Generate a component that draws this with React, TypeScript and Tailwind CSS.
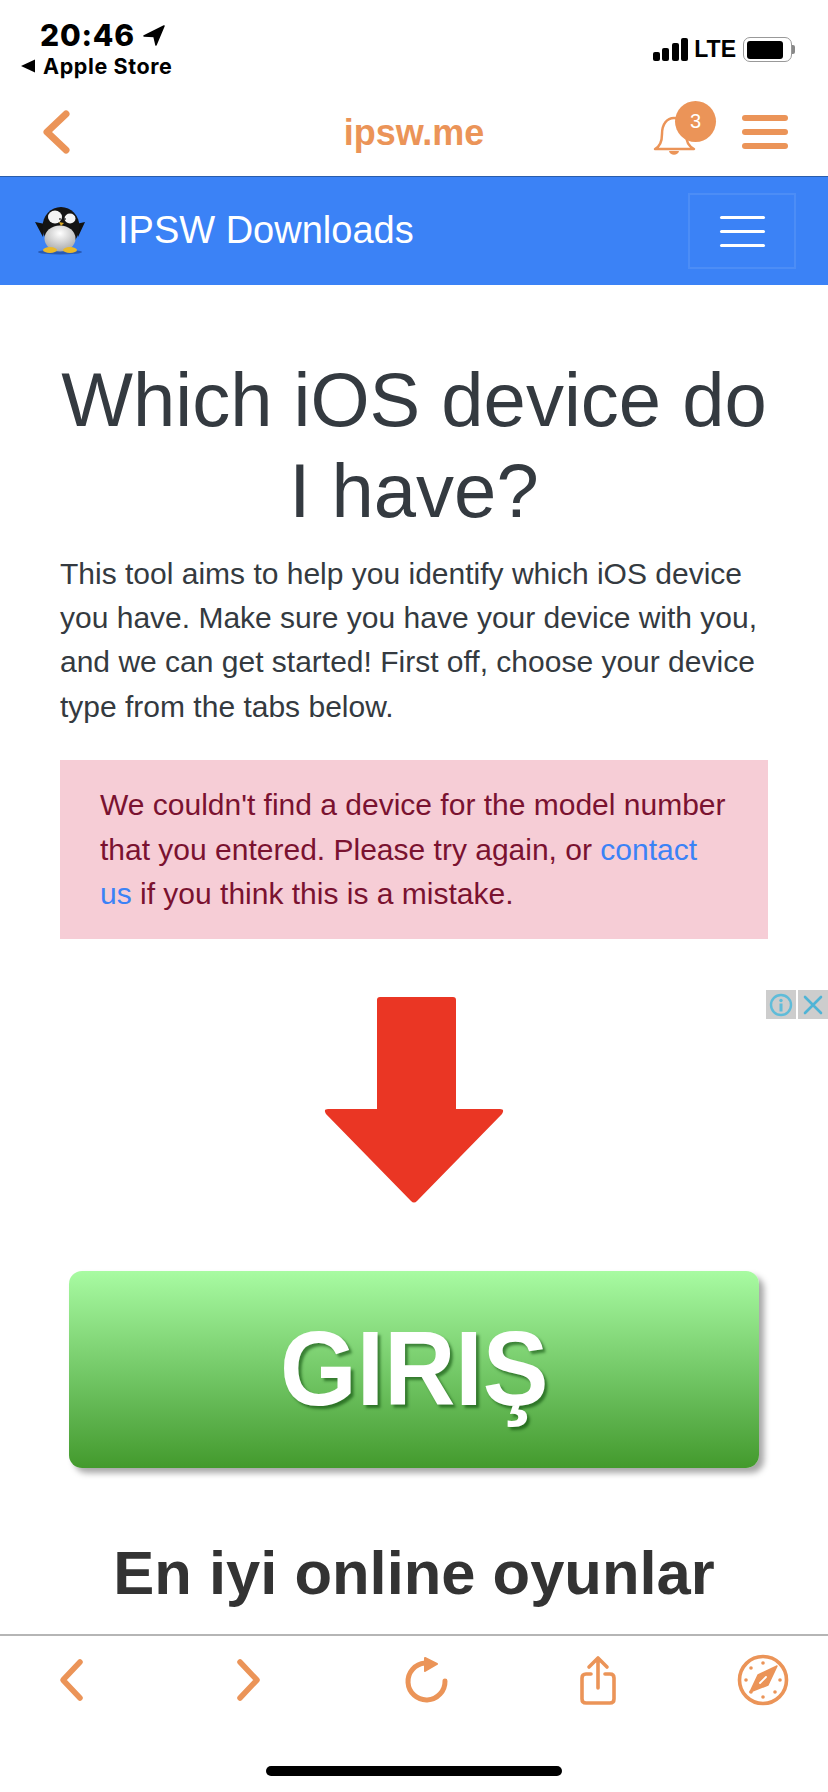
const orange = "#eb9458";

function Penguin() {
  return (
    <svg width="56" height="50" viewBox="0 0 56 50">
      <defs>
        <radialGradient id="belly" cx="50%" cy="30%" r="70%">
          <stop offset="0%" stopColor="#ffffff" />
          <stop offset="100%" stopColor="#a9a9a9" />
        </radialGradient>
      </defs>
      <ellipse cx="28" cy="46" rx="22" ry="2.5" fill="#1d3f8a" opacity="0.6" />
      <path d="M13 18 L3 16 L11 31 Z" fill="#111" />
      <path d="M44 18 L53 16 L46 31 Z" fill="#111" />
      <ellipse cx="29" cy="21" rx="18.5" ry="20" fill="#141414" />
      <ellipse cx="28" cy="32.5" rx="15.5" ry="13" fill="url(#belly)" />
      <ellipse cx="23" cy="11" rx="7" ry="6.5" fill="#f4f4f4" />
      <ellipse cx="38" cy="12.5" rx="5.5" ry="5" fill="#f4f4f4" />
      <circle cx="28" cy="13" r="0.9" fill="#333" />
      <circle cx="33" cy="13" r="0.9" fill="#333" />
      <path d="M27 16 L32 17 L29 20 Z" fill="#d8a726" />
      <ellipse cx="18" cy="44" rx="7" ry="3" fill="#eab92a" />
      <ellipse cx="38" cy="44" rx="7" ry="3" fill="#eab92a" />
    </svg>
  );
}

function StatusBar() {
  return (
    <div className="flex h-[92px] justify-between text-black">
      <div className="pl-[21px] pt-[17px]">
        <div className="flex items-center pl-[19px]">
          <span className="font-['Inter'] text-[30px] leading-[36px] font-extrabold tracking-[0.8px]">20:46</span>
          <svg width="22" height="22" viewBox="0 0 22 22" className="ml-[8px]">
            <path d="M21 2 L1 12 L11 12.5 L13 21 Z" fill="#000" stroke="#000" strokeLinejoin="round" strokeWidth="1.5" />
          </svg>
        </div>
        <div className="flex items-center">
          <svg width="15" height="14" viewBox="0 0 15 14">
            <path d="M14 0.5 V13.5 L0 7 Z" fill="#000" />
          </svg>
          <span className="ml-[7px] font-['Inter'] text-[21.5px] leading-[26px] font-bold tracking-[0.6px]">Apple Store</span>
        </div>
      </div>
      <div className="flex items-start pt-[37px] pr-[33px]">
        <div className="flex h-[24px] items-end gap-[2.5px]">
          <div className="h-[9px] w-[7px] rounded-[2px] bg-black" />
          <div className="h-[13px] w-[7px] rounded-[2px] bg-black" />
          <div className="h-[18px] w-[7px] rounded-[2px] bg-black" />
          <div className="h-[23px] w-[7px] rounded-[2px] bg-black" />
        </div>
        <span className="ml-[6px] text-[23px] leading-[24px] font-bold">LTE</span>
        <div className="ml-[7px] flex items-center">
          <div className="h-[25px] w-[49px] rounded-[7px] border-[1.5px] border-[#999] p-[2.5px]">
            <div className="h-full w-[36px] rounded-[3px] bg-black" />
          </div>
          <div className="h-[9px] w-[3px] rounded-r-[2px] bg-[#888]" />
        </div>
      </div>
    </div>
  );
}

function TopNav() {
  return (
    <div className="flex h-[85px] items-center border-b border-[#2a5dab] pb-[5px]" style={{ color: orange }}>
      <div className="w-[287px] pl-[42px]">
        <svg width="28" height="44" viewBox="0 0 28 44" className="block">
          <path d="M24 4 L5 22 L24 40" fill="none" stroke={orange} strokeWidth="7" strokeLinecap="round" strokeLinejoin="round" />
        </svg>
      </div>
      <div className="w-[254px] pt-[3px] text-center text-[36px] leading-[40px] font-bold">ipsw.me</div>
      <div className="flex flex-1 items-center pl-[112px]">
        <div className="relative h-[44px] w-[44px]">
          <svg width="44" height="44" viewBox="0 0 44 44" className="mt-[3px]">
            <path d="M2 36 C8 33 9 27 9 21 C9 11 14 5 21 5 C28 5 33 11 33 21 C33 27 35 33 41 36 Z" fill="none" stroke={orange} strokeWidth="2.5" strokeLinejoin="round" />
            <path d="M16 38 C17 43 25 43 26 38 Z" fill={orange} />
          </svg>
          <div className="absolute left-[22px] top-[-9px] h-[41px] w-[41px] rounded-full bg-[#eb9458] text-center text-[20px] leading-[41px] text-white">3</div>
        </div>
        <div className="ml-[45px] flex w-[46px] flex-col gap-[8px]">
          <div className="h-[6px] rounded-full bg-[#eb9458]" />
          <div className="h-[6px] rounded-full bg-[#eb9458]" />
          <div className="h-[6px] rounded-full bg-[#eb9458]" />
        </div>
      </div>
    </div>
  );
}

function BlueBar() {
  return (
    <div className="flex h-[108px] items-center bg-[#3b82f6] px-[32px]">
      <Penguin />
      <span className="ml-[30px] pb-[2px] text-[38px] leading-[44px] text-white">IPSW Downloads</span>
      <div className="ml-auto flex h-[76px] w-[108px] flex-col items-center justify-center gap-[11px] border-2 border-[#4c8df6]">
        <div className="h-[3px] w-[45px] rounded-full bg-white" />
        <div className="h-[3px] w-[45px] rounded-full bg-white" />
        <div className="h-[3px] w-[45px] rounded-full bg-white" />
      </div>
    </div>
  );
}

function AdBadge() {
  return (
    <div className="absolute right-0 top-0 flex gap-[2px]">
      <div className="flex h-[29px] w-[30px] items-center justify-center bg-[#cdcdcd]">
        <svg width="24" height="24" viewBox="0 0 24 24">
          <circle cx="12" cy="12" r="10" fill="none" stroke="#5fbcd9" strokeWidth="2.4" />
          <rect x="10.5" y="10.5" width="3" height="8" fill="#5fbcd9" />
          <circle cx="12" cy="7.5" r="1.7" fill="#5fbcd9" />
        </svg>
      </div>
      <div className="flex h-[29px] w-[30px] items-center justify-center bg-[#cdcdcd]">
        <svg width="22" height="22" viewBox="0 0 22 22">
          <path d="M3 3 L19 19 M19 3 L3 19" stroke="#4fb4d6" strokeWidth="2.6" strokeLinecap="round" />
        </svg>
      </div>
    </div>
  );
}

function Ad() {
  return (
    <div className="relative mt-[51px] flex flex-col items-center">
      <AdBadge />
      <svg width="184" height="208" viewBox="0 0 184 208" className="mt-[6px]">
        <path
          d="M55 4 Q55 1 58 1 L131 1 Q134 1 134 4 L134 113 L178 113 Q183 113 180 118 L95 205 Q92 208 89 205 L4 118 Q1 113 6 113 L55 113 Z"
          fill="#ea3624"
        />
      </svg>
      <div className="mt-[67px] flex h-[197px] w-[690px] items-center justify-center rounded-[13px] bg-gradient-to-b from-[#a8fba2] to-[#439a2c] shadow-[5px_5px_6px_rgba(0,0,0,0.35)]">
        <span className="scale-x-[0.93] pb-[4px] text-[106px] leading-[110px] font-bold text-white [text-shadow:3px_3px_3px_rgba(0,60,0,0.55)]">GIRIŞ</span>
      </div>
      <div className="mt-[70px] text-[61.5px] leading-[70px] font-bold text-[#333]">En iyi online oyunlar</div>
    </div>
  );
}

function BottomBar() {
  return (
    <div className="absolute bottom-0 left-0 right-0 h-[158px] border-t-2 border-[#b5b5b5] bg-white">
      <div className="flex h-[86px] items-center pl-[58px] pt-[2px]">
        <svg width="26" height="44" viewBox="0 0 26 44">
          <path d="M22 4 L5 22 L22 40" fill="none" stroke={orange} strokeWidth="5.5" strokeLinecap="round" strokeLinejoin="round" />
        </svg>
        <svg width="26" height="44" viewBox="0 0 26 44" className="ml-[152px]">
          <path d="M4 4 L21 22 L4 40" fill="none" stroke={orange} strokeWidth="5.5" strokeLinecap="round" strokeLinejoin="round" />
        </svg>
        <svg width="44" height="48" viewBox="0 0 44 48" className="ml-[143px]">
          <path d="M20 7 A18.5 18.5 0 1 0 40 25" fill="none" stroke={orange} strokeWidth="5" strokeLinecap="round" />
          <path d="M20 2 L32 8 L20 15 Z" fill={orange} stroke={orange} strokeWidth="2" strokeLinejoin="round" />
        </svg>
        <svg width="36" height="50" viewBox="0 0 36 50" className="ml-[131px]">
          <path d="M11 19 H6 Q2 19 2 23 V44 Q2 48 6 48 H30 Q34 48 34 44 V23 Q34 19 30 19 H25" fill="none" stroke={orange} strokeWidth="3.6" strokeLinecap="round" />
          <path d="M18 33 V3 M9 12 L18 3 L27 12" fill="none" stroke={orange} strokeWidth="3.6" strokeLinecap="round" strokeLinejoin="round" />
        </svg>
        <svg width="52" height="52" viewBox="0 0 52 52" className="ml-[121px]">
          <circle cx="26" cy="26" r="23.5" fill="none" stroke={orange} strokeWidth="3.6" />
          <circle cx="26" cy="9" r="1.8" fill={orange} />
          <circle cx="26" cy="43" r="1.8" fill={orange} />
          <circle cx="9" cy="26" r="1.8" fill={orange} />
          <circle cx="43" cy="26" r="1.8" fill={orange} />
          <circle cx="14" cy="14" r="1.8" fill={orange} />
          <circle cx="38" cy="38" r="1.8" fill={orange} />
          <circle cx="14" cy="38" r="1.8" fill={orange} />
          <path d="M40 12 L31 31 L13 38 L21 21 Z" fill={orange} stroke={orange} strokeWidth="1.5" strokeLinejoin="round" />
          <path d="M23 29 L29 23" stroke="#fff" strokeWidth="1.8" strokeLinecap="round" />
        </svg>
      </div>
      <div className="absolute bottom-[16px] left-[266px] h-[10px] w-[296px] rounded-full bg-black" />
    </div>
  );
}

export default function App() {
  return (
    <div className="relative h-[1792px] w-[828px] overflow-hidden bg-white font-['Liberation_Sans',Arial,sans-serif]">
      <StatusBar />
      <TopNav />
      <BlueBar />
      <div className="px-[60px] pt-[69px]">
        <h1 className="text-center text-[76px] leading-[91px] text-[#343a40]">Which iOS device do I have?</h1>
        <p className="mt-[16px] text-[30px] leading-[44.2px] text-[#343a40]">
          This tool aims to help you identify which iOS device you have. Make sure you have your device with you, and we can get started! First off, choose your device type from the tabs below.
        </p>
        <div className="mt-[31px] bg-[#f6cdd6] px-[40px] py-[23.5px] text-[30px] leading-[44.2px] text-[#7a1230]">
          We couldn't find a device for the model number that you entered. Please try again, or <span className="text-[#3b82f6]">contact us</span> if you think this is a mistake.
        </div>
      </div>
      <Ad />
      <BottomBar />
    </div>
  );
}
